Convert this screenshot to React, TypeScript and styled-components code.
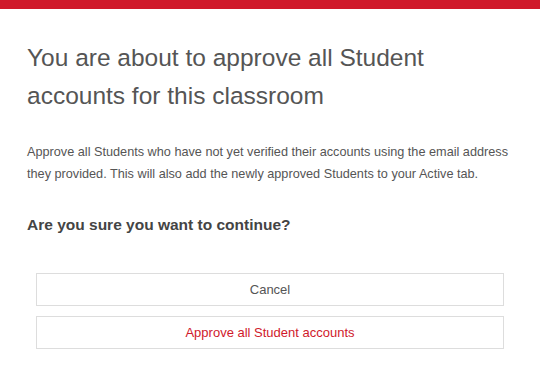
import React from 'react';
import styled, { createGlobalStyle } from 'styled-components';

const GlobalStyle = createGlobalStyle`
  html, body {
    margin: 0;
    padding: 0;
    background: #fff;
  }
  body {
    font-family: "Liberation Sans", Arial, Helvetica, sans-serif;
  }
`;

const Dialog = styled.div`
  width: 540px;
  height: 376px;
  background: #fff;
  border-top: 9px solid #d0192b;
  box-sizing: border-box;
  overflow: hidden;
`;

const Body = styled.div`
  padding: 30px 27px 0;
  display: flex;
  flex-direction: column;
`;

const Title = styled.h1`
  margin: 0;
  font-size: 24.5px;
  line-height: 38px;
  font-weight: 400;
  color: #555;
`;

const Description = styled.p`
  margin: 26px 0 0;
  font-size: 12.7px;
  line-height: 22px;
  color: #555;
`;

const Question = styled.p`
  margin: 30px 0 0;
  font-size: 15.5px;
  line-height: 20px;
  font-weight: 700;
  color: #444;
`;

const Actions = styled.div`
  display: flex;
  flex-direction: column;
  gap: 10px;
  margin: 38px 9px 0;
`;

const ActionButton = styled.button<{ $primary?: boolean }>`
  height: 33px;
  width: 100%;
  background: #fff;
  border: 1px solid #ddd;
  border-radius: 0;
  font-family: inherit;
  font-size: 13px;
  color: ${props => (props.$primary ? '#d0192b' : '#555')};
  cursor: pointer;
`;

export default function App() {
  return (
    <>
      <GlobalStyle />
      <Dialog>
        <Body>
          <Title>You are about to approve all Student accounts for this classroom</Title>
          <Description>
            Approve all Students who have not yet verified their accounts using the email address
            they provided. This will also add the newly approved Students to your Active tab.
          </Description>
          <Question>Are you sure you want to continue?</Question>
          <Actions>
            <ActionButton>Cancel</ActionButton>
            <ActionButton $primary>Approve all Student accounts</ActionButton>
          </Actions>
        </Body>
      </Dialog>
    </>
  );
}
